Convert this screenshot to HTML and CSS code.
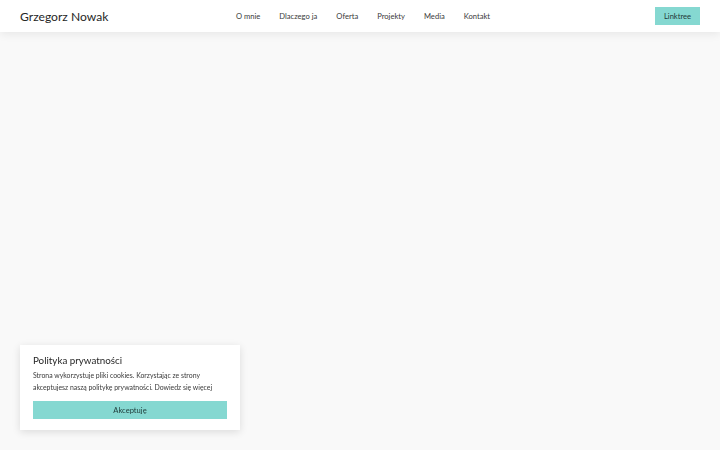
FILE: index.html
```html
<!DOCTYPE html>
<html lang="pl">
<head>
<meta charset="utf-8">
<title>Grzegorz Nowak</title>
<link rel="stylesheet" href="styles.css">
</head>
<body>
<header class="site-header">
  <a class="brand" href="#">Grzegorz Nowak</a>
  <nav class="main-nav">
    <a href="#">O mnie</a>
    <a href="#">Dlaczego ja</a>
    <a href="#">Oferta</a>
    <a href="#">Projekty</a>
    <a href="#">Media</a>
    <a href="#">Kontakt</a>
  </nav>
  <a class="btn-linktree" href="#">Linktree</a>
</header>
<main class="page"></main>
<aside class="cookie-box">
  <h2 class="cookie-title">Polityka prywatności</h2>
  <p class="cookie-text">Strona wykorzystuje pliki cookies. Korzystając ze strony akceptujesz naszą politykę prywatności. <a href="#">Dowiedz się więcej</a></p>
  <button class="cookie-accept" type="button">Akceptuję</button>
</aside>
</body>
</html>
```
FILE: styles.css
```css
* { box-sizing: border-box; }
html, body { margin: 0; height: 100%; }
body {
  background: #f9f9f9;
  font-family: "Lato", "Liberation Sans", sans-serif;
  color: #222;
}
a { color: inherit; text-decoration: none; }

.site-header {
  height: 32px;
  background: #fff;
  display: flex;
  align-items: center;
  padding: 0 20px;
  box-shadow: 0 2px 10px rgba(0,0,0,0.08);
  position: relative;
  z-index: 2;
}
.brand {
  width: 216px;
  font-size: 12.1px;
  color: #262626;
}
.main-nav {
  display: flex;
  gap: 19px;
  font-size: 7.6px;
  color: #3a3a3a;
}
.btn-linktree {
  margin-left: auto;
  background: #85d8d1;
  color: #1f3a38;
  font-size: 7.6px;
  height: 18px;
  width: 45px;
  display: flex;
  align-items: center;
  justify-content: center;
}

.cookie-box {
  position: fixed;
  left: 20px;
  bottom: 20px;
  width: 220px;
  background: #fff;
  padding: 8px 13px 11px;
  box-shadow: 0 2px 8px rgba(0,0,0,0.12);
}
.cookie-title {
  margin: 0 0 2px;
  font-weight: 400;
  font-size: 9.8px;
  line-height: 14px;
  color: #262626;
}
.cookie-text {
  margin: 0 0 8px;
  font-size: 6.9px;
  line-height: 12px;
  color: #3a3a3a;
}
.cookie-accept {
  display: block;
  width: 100%;
  height: 18px;
  border: 0;
  background: #85d8d1;
  font-family: inherit;
  font-size: 7.6px;
  color: #1f3a38;
  cursor: pointer;
}
```
